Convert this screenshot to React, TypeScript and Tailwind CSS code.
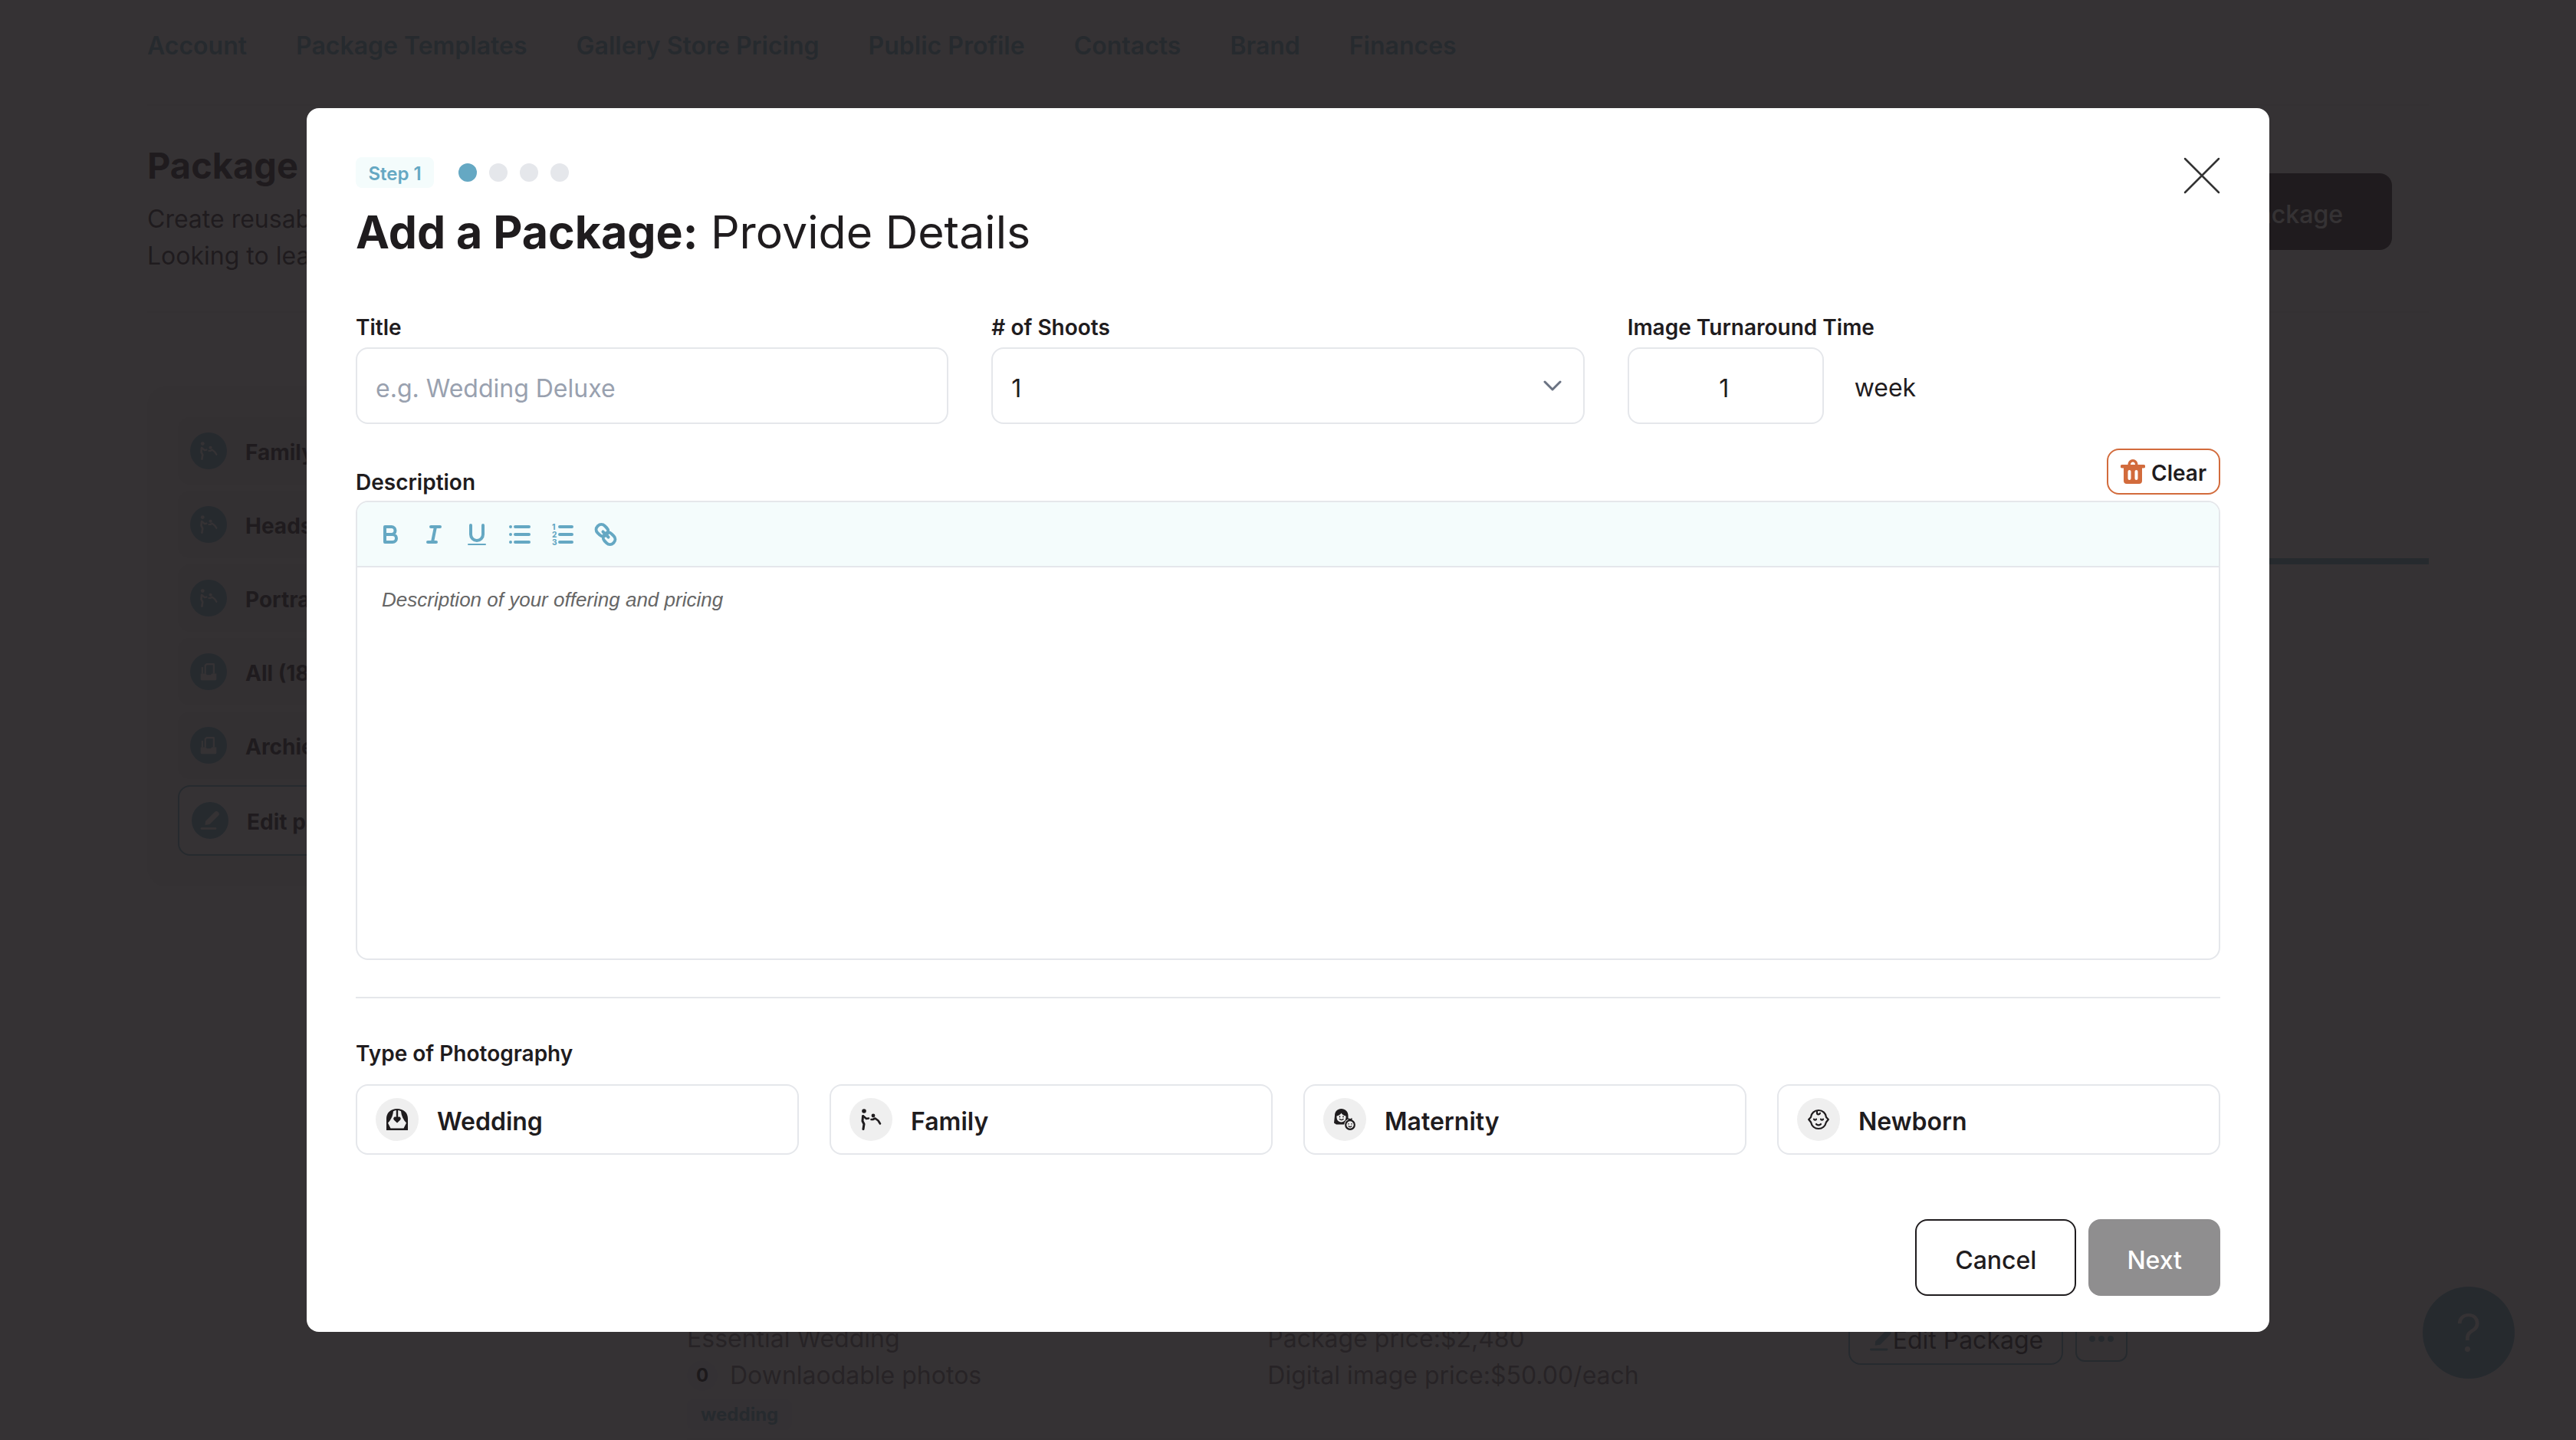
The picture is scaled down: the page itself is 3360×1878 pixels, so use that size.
import React from "react";

const navLinks = ["Account", "Package Templates", "Gallery Store Pricing", "Public Profile", "Contacts", "Brand", "Finances"];

function WeddingIcon({ className }: { className: string }) {
  return (
    <svg viewBox="0 0 28 28" className={className} aria-hidden="true">
      <path fill="currentColor" d="M0 28V13C0 5 6 0 14 0s14 5 14 13v15z" />
      <path fill="#efefef" d="M9 3.200c1.500-.9 3-1.200 5-1.200s3.500.3 5 1.200C19.500 9 22 14.500 26 18.500L22.500 25.500h-17L2 18.500C6 14.500 8.500 9 9 3.200z" />
      <path fill="currentColor" d="M12.800 1h2.400v11h-2.400z" />
      <path fill="currentColor" d="M14 18.500l-4-3.800c-1.600-1.700-.5-4.200 1.500-4.200 1.200 0 2 .6 2.500 1.400.5-.8 1.300-1.400 2.500-1.400 2 0 3.100 2.500 1.500 4.200z" />
    </svg>
  );
}

function FamilyIcon({ className }: { className: string }) {
  return (
    <svg viewBox="0 0 28 28" className={className} fill="none" stroke="currentColor" strokeLinecap="round" strokeLinejoin="round" aria-hidden="true">
      <circle cx="5" cy="3" r="2.800" fill="currentColor" stroke="none" />
      <circle cx="17" cy="9" r="2.400" fill="currentColor" stroke="none" />
      <path strokeWidth="3" d="M3.500 9.500 3 16l2 4-1 6.500" />
      <path strokeWidth="2.600" d="M4 9.500l4 3.500 3-.5M14.500 14h2l3-1.500 4 3 2.500 4" />
    </svg>
  );
}

function MaternityIcon({ className }: { className: string }) {
  return (
    <svg viewBox="0 0 28 28" className={className} aria-hidden="true">
      <path fill="currentColor" d="M1 9C1 3.500 4.500 0 9.500 0S18.500 3.500 18.500 9v4.500L13.500 20.500H3L0 18.500z" />
      <path fill="#efefef" d="M3.500 9.500c2.500-.5 5-2 6-4 1 2 3.500 3.500 6 4v2a6 6 0 0 1-12 0z" />
      <path fill="none" stroke="currentColor" strokeWidth="1.500" strokeLinecap="round" d="M7.500 10v.8M12 10v.8M7.500 13.500c1.200 1.200 3.300 1.200 4.500 0" />
      <circle cx="21" cy="21" r="7.800" fill="#efefef" />
      <circle cx="21" cy="21" r="5.800" fill="#efefef" stroke="currentColor" strokeWidth="2.200" />
      <path fill="currentColor" d="M18.500 12l2.500 1.200 2.500-1.200v3.500h-5z" />
      <path fill="none" stroke="currentColor" strokeWidth="1.300" strokeLinecap="round" d="M19 19.500v.5M23 19.500v.5M19.200 22.800c1 1 2.600 1 3.600 0" />
    </svg>
  );
}

function NewbornIcon({ className }: { className: string }) {
  return (
    <svg viewBox="0 0 28 28" className={className} fill="none" stroke="currentColor" strokeWidth="2.200" strokeLinecap="round" strokeLinejoin="round" aria-hidden="true">
      <path d="M14 2c-5.500 0-9.500 4-10 9L1.200 14 4 17.500C5.200 22.500 9 26 14 26s8.800-3.500 10-8.500l2.800-3.500L24 11c-.5-5-4.500-9-10-9z" />
      <path d="M12 3v2.500c0 2.500 3.500 2.500 4 .3M8 13.500c.3 1.500 2.700 1.500 3 0M17 13.500c.3 1.500 2.700 1.500 3 0M11 20c1.500 1.800 4.500 1.800 6 0" />
    </svg>
  );
}

function ArchiveIcon({ className }: { className: string }) {
  return (
    <svg viewBox="0 0 28 28" className={className} aria-hidden="true">
      <path fill="none" stroke="currentColor" strokeWidth="2.500" strokeLinejoin="round" d="M9 17V4.500L11 2.500h11V17M4.500 17V7" />
      <path fill="currentColor" d="M2 17h8l1.500 2h6l1.500-2h7v8.500a1.500 1.500 0 0 1-1.500 1.500h-21A1.500 1.500 0 0 1 2 25.500z" />
    </svg>
  );
}

function PencilIcon({ className }: { className: string }) {
  return (
    <svg viewBox="0 0 28 28" className={className} aria-hidden="true">
      <path fill="currentColor" d="M8 15 20 3a3 3 0 0 1 4.500 0l.5.500a3 3 0 0 1 0 4L13.500 19 7.500 20z" />
      <path stroke="currentColor" strokeWidth="2.600" strokeLinecap="round" d="M3 24.500h18" />
    </svg>
  );
}

function TrashIcon({ className }: { className: string }) {
  return (
    <svg viewBox="0 0 32 32" className={className} aria-hidden="true">
      <path fill="currentColor" fillRule="evenodd" d="M9.500 7C9.500 3 12.500 0 16 0s6.500 3 6.500 7H30a2 2 0 0 1 0 4.500h-2V28a4 4 0 0 1-4 4H8a4 4 0 0 1-4-4V11.500H2A2 2 0 0 1 2 7zm3.500 0h6c0-2-1.300-3.500-3-3.500S13 5 13 7zM11.500 14a2 2 0 0 0-2 2v9a2 2 0 0 0 4 0v-9a2 2 0 0 0-2-2zm9 0a2 2 0 0 0-2 2v9a2 2 0 0 0 4 0v-9a2 2 0 0 0-2-2z" />
    </svg>
  );
}

const sidebarItems = [
  { label: "Family (2)", Icon: FamilyIcon },
  { label: "Headshot (1)", Icon: FamilyIcon },
  { label: "Portrait (1)", Icon: FamilyIcon },
  { label: "All (18)", Icon: ArchiveIcon },
  { label: "Archieved (1)", Icon: ArchiveIcon },
];

const photographyTypes = [
  { label: "Wedding", Icon: WeddingIcon },
  { label: "Family", Icon: FamilyIcon },
  { label: "Maternity", Icon: MaternityIcon },
  { label: "Newborn", Icon: NewbornIcon },
];

const tools = [
  { label: "Bold", art: <path strokeWidth="4" d="M6 4h8.500a5 5 0 0 1 0 10H6zM6 14h10a5 5 0 0 1 0 10H6z" /> },
  { label: "Italic", art: <path strokeWidth="4" d="M10 4h12M6 24h11M16 4l-4 20" /> },
  {
    label: "Underline",
    art: (
      <>
        <path strokeWidth="4" d="M6 2v12a8 8 0 0 0 16 0V2" />
        <path strokeWidth="2" d="M3 27h22" />
      </>
    ),
  },
  { label: "Bulleted list", art: <path strokeWidth="4" d="M2 4h0M2 14h0M2 24h0M8 4h18M8 14h18M8 24h18" /> },
  {
    label: "Numbered list",
    art: (
      <>
        <path strokeWidth="4" d="M10 4h16M10 14h16M10 24h16" />
        <g fill="currentColor" stroke="none" fontSize="10" fontWeight="800">
          <text x="0" y="8">1</text>
          <text x="0" y="18">2</text>
          <text x="0" y="28">3</text>
        </g>
      </>
    ),
  },
  {
    label: "Link",
    art: (
      <g transform="rotate(45 14 14)" strokeWidth="4">
        <rect x="-1" y="7" width="16" height="13" rx="6" />
        <rect x="13" y="8" width="16" height="13" rx="6" />
        <path d="M9 14h10" />
      </g>
    ),
  },
];

function BackgroundPage() {
  return (
    <div className="flex h-screen flex-col overflow-hidden bg-white px-48" aria-hidden="true">
      <nav className="flex h-[138px] shrink-0 gap-16 border-b-2 border-[#efefef] pt-10 text-[32px] leading-10 font-semibold text-[#65a8c3]">
        {navLinks.map((l) => (
          <a key={l} href="#" className="whitespace-nowrap">{l}</a>
        ))}
      </nav>
      <header className="flex h-[270px] shrink-0 items-start justify-between border-b-2 border-[#efefef] pr-12">
        <div className="pt-12">
          <h2 className="text-[47px] leading-[60px] font-bold">Package Templates</h2>
          <p className="mt-4 text-[32px] leading-12">Create reusable pricing<br />Looking to learn more?</p>
        </div>
        <button className="mt-[88px] h-25 rounded-2xl bg-[#1f1c1e] px-16 pt-2 text-[32px] font-medium text-white">Add a Package</button>
      </header>
      <div className="flex min-h-0 flex-1 gap-16">
        <aside className="mt-24 flex w-[640px] shrink-0 flex-col gap-2 self-start rounded-3xl bg-[#efefef] p-10">
          {sidebarItems.map(({ label, Icon }) => (
            <a key={label} href="#" className="flex h-22 items-center gap-6 rounded-2xl bg-[#e6e6e6] px-4 text-[28px] font-bold">
              <span className="flex size-12 items-center justify-center rounded-full bg-[#65a8c3] text-white"><Icon className="size-6" /></span>
              <span className="pt-1">{label}</span>
            </a>
          ))}
          <a href="#" className="flex h-23 items-center gap-6 rounded-2xl border-2 border-[#65a8c3] bg-white px-4 text-[28px] font-bold">
            <span className="flex size-12 items-center justify-center rounded-full bg-[#65a8c3] text-white"><PencilIcon className="size-7" /></span>
            <span className="pt-1">Edit packages</span>
          </a>
        </aside>
        <section className="flex flex-1 flex-col justify-between pt-80">
          <div className="h-2 bg-[#65a8c3]" />
          <div className="grid grid-cols-3 border-b-2 border-[#efefef] pb-2.5 text-[32px] leading-12 text-[#6e6c6d]">
            <div className="pt-1.5">
              <p>Essential Wedding</p>
              <p className="flex items-center gap-4">
                <span className="flex size-10 items-center justify-center rounded-full bg-[#f4f4f8] text-2xl font-bold text-black">0</span>
                Downlaodable photos
              </p>
              <span className="mt-1 inline-flex h-10 items-center rounded-lg border-2 border-[#f0f0f8] bg-[#f4f4fb] px-4 text-2xl font-bold text-[#65a8c3]">wedding</span>
            </div>
            <div className="pt-1.5">
              <p>Package price:$2,480</p>
              <p>Digital image price:$50.00/each</p>
            </div>
            <div className="flex items-start gap-4">
              <button className="flex h-16 items-center rounded-2xl border-2 border-[#65a8c3] px-6 text-[32px] text-[#1f1c1e]">
                <PencilIcon className="size-8 text-[#65a8c3]" />
                Edit Package
              </button>
              <button className="flex h-15 w-17 items-center justify-center gap-1 rounded-xl border-2 border-[#65a8c3]">
                <span className="size-2 rounded-full bg-[#65a8c3]" />
                <span className="size-2 rounded-full bg-[#65a8c3]" />
                <span className="size-2 rounded-full bg-[#65a8c3]" />
              </button>
            </div>
          </div>
        </section>
      </div>
      <button className="fixed right-20 bottom-20 flex size-30 items-center justify-center rounded-full bg-[#65a8c3] text-[68px] font-light text-white">?</button>
    </div>
  );
}

function PackageDialog() {
  return (
    <form role="dialog" aria-labelledby="dialog-title" onSubmit={(e) => e.preventDefault()} className="w-full max-w-[2560px] rounded-2xl bg-white px-16 pt-16 pb-[47px]">
      <div className="flex items-start justify-between">
        <div>
          <div className="flex items-center gap-8">
            <span className="flex h-10 w-[102px] items-center justify-center rounded-lg bg-[#f4fcfc] pt-1 text-2xl font-semibold text-[#65a8c3]">Step 1</span>
            <div className="flex gap-4">
              <span className="size-6 rounded-full bg-[#65a8c3]" />
              <span className="size-6 rounded-full bg-gray-200" />
              <span className="size-6 rounded-full bg-gray-200" />
              <span className="size-6 rounded-full bg-gray-200" />
            </div>
          </div>
          <h1 id="dialog-title" className="mt-[22px] text-[59px] leading-[72px]"><strong className="font-bold">Add a Package:</strong> Provide Details</h1>
        </div>
        <button type="button" aria-label="Close">
          <svg viewBox="0 0 48 48" className="size-12" fill="none" stroke="#333" strokeWidth="2.500" strokeLinecap="round"><path d="M2 2l44 44M46 2L2 46" /></svg>
        </button>
      </div>

      <div className="mt-17 grid grid-cols-3 gap-14">
        <div className="flex flex-col gap-1.5">
          <label htmlFor="title" className="text-[28px] leading-10 font-semibold">Title</label>
          <input id="title" placeholder="e.g. Wedding Deluxe" className="h-25 w-full rounded-2xl border-2 border-gray-200 px-6 pt-1.5 text-[32px] placeholder:text-gray-400" />
        </div>
        <div className="flex flex-col gap-1.5">
          <label htmlFor="shoots" className="text-[28px] leading-10 font-semibold"># of Shoots</label>
          <div className="relative">
            <select id="shoots" className="h-25 w-full appearance-none rounded-2xl border-2 border-gray-200 bg-white px-6 pt-2 text-[32px]">
              <option>1</option>
            </select>
            <svg viewBox="0 0 24 14" className="pointer-events-none absolute top-[43px] right-[30px] h-3.5 w-6 text-gray-500" fill="none" stroke="currentColor" strokeWidth="3" strokeLinecap="round" strokeLinejoin="round"><path d="M2 2l10 10L22 2" /></svg>
          </div>
        </div>
        <div className="flex flex-col gap-1.5">
          <label htmlFor="turnaround" className="text-[28px] leading-10 font-semibold">Image Turnaround Time</label>
          <div className="flex items-center gap-10">
            <input id="turnaround" defaultValue="1" className="h-25 w-64 rounded-2xl border-2 border-gray-200 pr-7 pl-6 pt-1.5 text-center text-[32px]" />
            <span className="pt-1.5 text-[32px]">week</span>
          </div>
        </div>
      </div>

      <div className="mt-8 flex items-end justify-between">
        <label htmlFor="description" className="text-[28px] leading-8 font-semibold">Description</label>
        <button type="button" className="flex h-15 items-center gap-2 rounded-2xl border-2 border-[#d26b3c] px-4 text-[28px] font-semibold">
          <TrashIcon className="size-8 text-[#d26b3c]" />
          <span className="pt-1">Clear</span>
        </button>
      </div>
      <div className="mt-2 overflow-hidden rounded-2xl border-2 border-gray-200">
        <div className="flex h-[85px] items-center gap-7 border-b-2 border-gray-200 bg-[#f4fcfc] px-[30px]">
          {tools.map((t) => (
            <button key={t.label} type="button" aria-label={t.label} className="text-[#65a8c3]">
              <svg viewBox="0 0 28 28" className="size-7 overflow-visible" fill="none" stroke="currentColor" strokeLinecap="round" strokeLinejoin="round">{t.art}</svg>
            </button>
          ))}
        </div>
        <textarea id="description" placeholder="Description of your offering and pricing" className="block h-[510px] w-full resize-none px-8 py-6 font-['Liberation_Sans',Arial,sans-serif] text-[26px] leading-9 placeholder:text-[#666] placeholder:italic" />
      </div>

      <fieldset className="mt-12 border-t-2 border-gray-200 pt-[52px]">
        <h2 className="text-[28px] leading-10 font-semibold">Type of Photography</h2>
        <div className="mt-5 grid grid-cols-4 gap-10">
          {photographyTypes.map(({ label, Icon }) => (
            <label key={label} className="flex items-center gap-6 rounded-2xl border-2 border-gray-200 px-6 py-4 text-[32px] leading-12 font-semibold">
              <input type="radio" name="type" className="sr-only" />
              <span className="flex size-14 items-center justify-center rounded-full bg-[#efefef]"><Icon className="size-7" /></span>
              <span className="pt-1.5">{label}</span>
            </label>
          ))}
        </div>
      </fieldset>

      <div className="mt-21 flex justify-end gap-4 text-[32px] font-medium">
        <button type="button" className="h-25 rounded-2xl border-2 border-[#1f1c1e] px-[50px] pt-2">Cancel</button>
        <button type="submit" className="h-25 rounded-2xl border-2 border-[#8f8e8f] bg-[#8f8e8f] px-12 pt-2 text-white">Next</button>
      </div>
    </form>
  );
}

export default function App() {
  return (
    <div className="font-['Inter',sans-serif] text-[#1f1c1e]">
      <BackgroundPage />
      <div className="fixed inset-0 flex items-center justify-center bg-[#1f1c1e]/90 px-48">
        <PackageDialog />
      </div>
    </div>
  );
}
